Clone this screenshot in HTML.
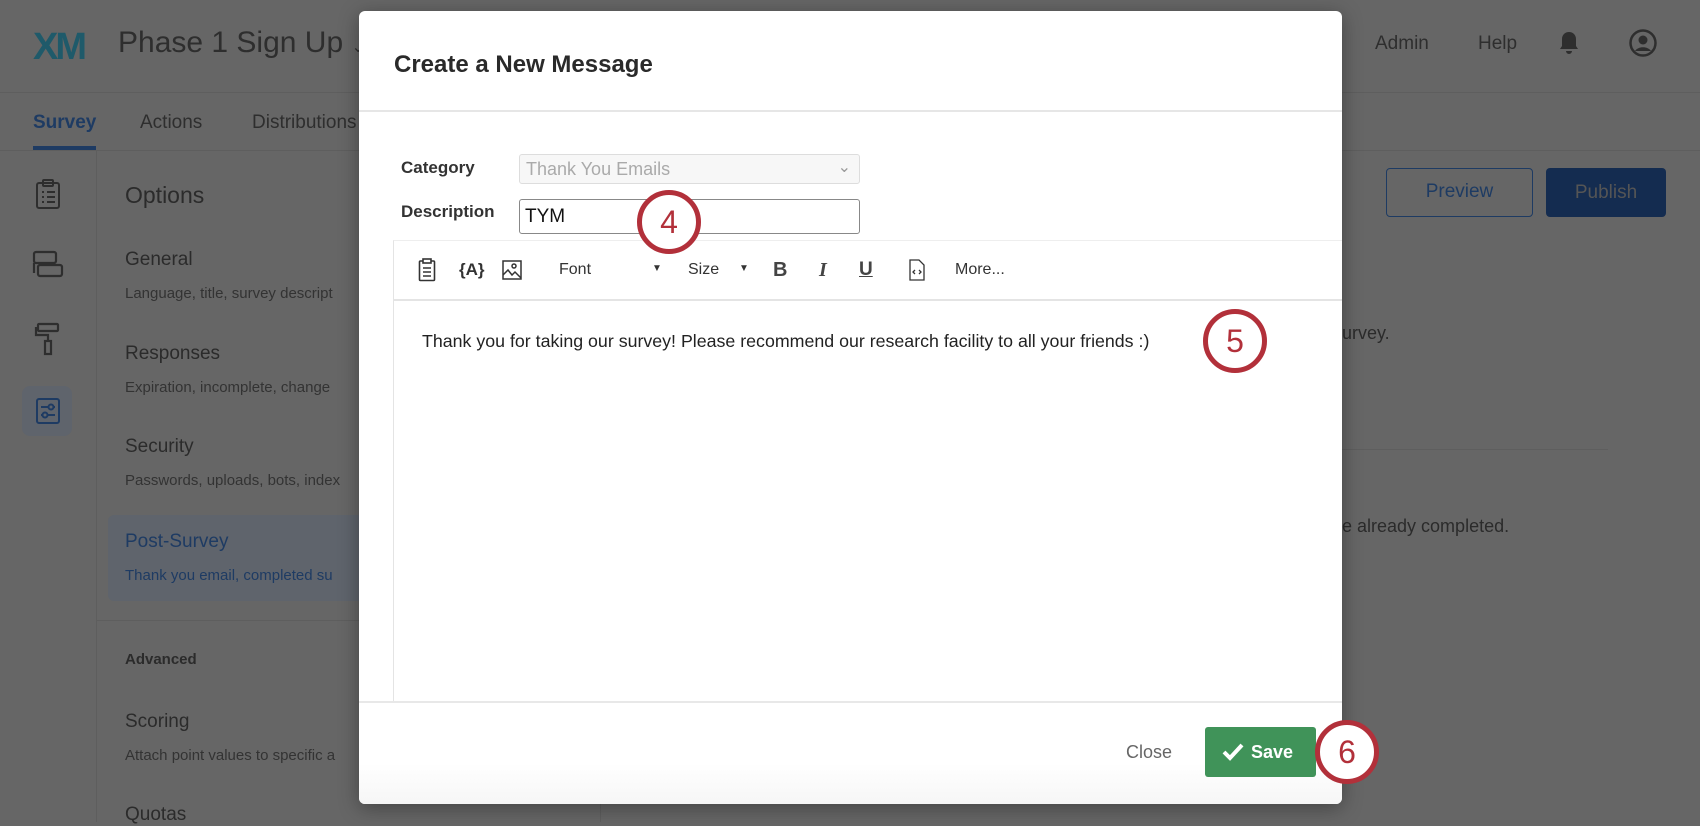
<!DOCTYPE html>
<html><head><meta charset="utf-8"><style>
*{box-sizing:border-box;margin:0;padding:0}
body{width:1700px;height:822px;overflow:hidden;background:#666;font-family:"Liberation Sans",sans-serif;position:relative;color:#2b2b2b}
.a{position:absolute;white-space:nowrap}
.ring{position:absolute;width:64px;height:64px;border:5px solid #b2303a;border-radius:50%;background:#fff;color:#b2303a;font-size:32px;text-align:center;line-height:54px}
</style></head><body>
<div class="a" style="left:0;top:0;width:1700px;height:93px;border-bottom:1px solid #5e5e5e"></div>
<div class="a" style="left:33px;top:26px;font-size:38px;font-weight:bold;letter-spacing:-3px;color:#1f5a6a">XM</div>
<div class="a" style="left:118px;top:26px;font-size:30px;color:#2e2e2e">Phase 1 Sign Up <span style="font-size:16px">&#8964;</span></div>
<div class="a" style="left:1375px;top:33px;font-size:19px;color:#2e2e2e">Admin</div>
<div class="a" style="left:1478px;top:33px;font-size:19px;color:#2e2e2e">Help</div>
<svg class="a" style="left:1557px;top:30px" width="24" height="26" viewBox="0 0 24 26"><path d="M12 2c-4 0-7 3-7 7v7l-2 3h18l-2-3V9c0-4-3-7-7-7zM9 21a3 3 0 0 0 6 0z" fill="#2e2e2e"/></svg>
<svg class="a" style="left:1628px;top:28px" width="30" height="30" viewBox="0 0 30 30"><circle cx="15" cy="15" r="12.5" fill="none" stroke="#2e2e2e" stroke-width="2.5"/><circle cx="15" cy="12" r="4.5" fill="#2e2e2e"/><path d="M7 23c3-5 13-5 16 0" fill="#2e2e2e"/></svg>
<div class="a" style="left:0;top:150px;width:1700px;border-top:1px solid #5e5e5e"></div>
<div class="a" style="left:33px;top:112px;font-size:19px;font-weight:bold;color:#1e3b63">Survey</div>
<div class="a" style="left:33px;top:146px;width:63px;height:4px;background:#1e3b63"></div>
<div class="a" style="left:140px;top:112px;font-size:19px;color:#2e2e2e">Actions</div>
<div class="a" style="left:252px;top:112px;font-size:19px;color:#2e2e2e">Distributions</div>
<div class="a" style="left:96px;top:150px;height:672px;border-left:1px solid #5e5e5e"></div>
<div class="a" style="left:600px;top:150px;height:672px;border-left:1px solid #5e5e5e"></div>
<div class="a" style="left:22px;top:386px;width:50px;height:50px;border-radius:8px;background:#5f646c"></div>
<svg class="a" style="left:34px;top:178px" width="28" height="32" viewBox="0 0 28 32" fill="none" stroke="#2e2e2e" stroke-width="2"><rect x="3" y="5" width="22" height="25" rx="2"/><rect x="9" y="2" width="10" height="6" rx="1"/><path d="M8 14h2M13 14h8M8 19h2M13 19h8M8 24h2M13 24h8"/></svg>
<svg class="a" style="left:32px;top:250px" width="32" height="30" viewBox="0 0 32 30" fill="none" stroke="#2e2e2e" stroke-width="2.2"><rect x="2" y="2" width="22" height="11" rx="2"/><rect x="6" y="15" width="24" height="11" rx="2"/><path d="M2 13v10"/></svg>
<svg class="a" style="left:34px;top:322px" width="28" height="34" viewBox="0 0 28 34" fill="none" stroke="#2e2e2e" stroke-width="2.2"><rect x="4" y="2" width="20" height="7" rx="1"/><path d="M2 5v8h12v6"/><rect x="11" y="19" width="6" height="13"/></svg>
<svg class="a" style="left:35px;top:397px" width="26" height="28" viewBox="0 0 26 28" fill="none" stroke="#1e3b63" stroke-width="2"><rect x="2" y="2" width="22" height="24" rx="2"/><path d="M6 10h14M6 18h14"/><circle cx="16" cy="10" r="2.5" fill="#5f646c"/><circle cx="10" cy="18" r="2.5" fill="#5f646c"/></svg>
<div class="a" style="left:125px;top:182px;font-size:23px">Options</div>
<div class="a" style="left:125px;top:249px;font-size:19px">General</div>
<div class="a" style="left:125px;top:285px;font-size:15px;color:#333">Language, title, survey descript</div>
<div class="a" style="left:125px;top:343px;font-size:19px">Responses</div>
<div class="a" style="left:125px;top:379px;font-size:15px;color:#333">Expiration, incomplete, change</div>
<div class="a" style="left:125px;top:436px;font-size:19px">Security</div>
<div class="a" style="left:125px;top:472px;font-size:15px;color:#333">Passwords, uploads, bots, index</div>
<div class="a" style="left:108px;top:515px;width:260px;height:86px;background:#5f646c;border-radius:6px"></div>
<div class="a" style="left:125px;top:531px;font-size:19px;color:#1e3b63">Post-Survey</div>
<div class="a" style="left:125px;top:567px;font-size:15px;color:#1e3b63">Thank you email, completed su</div>
<div class="a" style="left:96px;top:620px;width:264px;border-top:1px solid #5e5e5e"></div>
<div class="a" style="left:125px;top:651px;font-size:15px;font-weight:bold">Advanced</div>
<div class="a" style="left:125px;top:711px;font-size:19px">Scoring</div>
<div class="a" style="left:125px;top:747px;font-size:15px;color:#333">Attach point values to specific a</div>
<div class="a" style="left:125px;top:804px;font-size:19px">Quotas</div>
<div class="a" style="left:1386px;top:168px;width:147px;height:49px;border:1.5px solid #1e3b63;border-radius:4px;color:#1e3b63;font-size:19px;text-align:center;line-height:46px">Preview</div>
<div class="a" style="left:1546px;top:168px;width:120px;height:49px;background:#142c50;border-radius:4px;font-size:19px;text-align:center;line-height:49px;color:#555">Publish</div>
<div class="a" style="left:1342px;top:323px;font-size:18px">urvey.</div>
<div class="a" style="left:1342px;top:449px;width:266px;border-top:1px solid #5e5e5e"></div>
<div class="a" style="left:1342px;top:516px;font-size:18px">e already completed.</div>

<div class="a" style="left:359px;top:11px;width:983px;height:793px;background:#fff;border-radius:6px;box-shadow:0 4px 20px rgba(0,0,0,.35);overflow:hidden">
 <div class="a" style="left:35px;top:40px;font-size:24px;font-weight:bold;color:#2a2a2a">Create a New Message</div>
 <div class="a" style="left:0;top:99px;width:983px;border-top:2px solid #e6e6e6"></div>
 <div class="a" style="left:42px;top:147px;font-size:17px;font-weight:bold;color:#333">Category</div>
 <div class="a" style="left:160px;top:143px;width:341px;height:30px;border:1px solid #ddd;border-radius:3px;background:#f7f7f7;color:#aaa;font-size:18px;padding:4px 6px">Thank You Emails<span style="position:absolute;right:8px;top:2px;color:#999;font-size:16px">&#8964;</span></div>
 <div class="a" style="left:42px;top:191px;font-size:17px;font-weight:bold;color:#333">Description</div>
 <div class="a" style="left:160px;top:188px;width:341px;height:35px;border:1.5px solid #888;border-radius:3px;font-size:19px;color:#111;padding:6px 5px">TYM</div>
 <div class="a" style="left:34px;top:229px;width:949px;height:473px;border-left:1px solid #e4e4e4;border-top:1px solid #eee"></div>
 <div class="a" style="left:34px;top:288px;width:949px;border-top:2px solid #e4e4e4"></div>
 <svg class="a" style="left:59px;top:247px" width="18" height="24" viewBox="0 0 18 24" fill="none" stroke="#333" stroke-width="1.6"><rect x="1.5" y="3" width="15" height="19.5" rx="1"/><rect x="5" y="1" width="8" height="4" fill="#fff"/><path d="M5 10h8M5 14h8M5 18h8"/></svg>
 <div class="a" style="left:100px;top:249px;font-size:17px;font-weight:bold;color:#333">{A}</div>
 <svg class="a" style="left:143px;top:249px" width="20" height="20" viewBox="0 0 20 20" fill="none" stroke="#333" stroke-width="1.5"><rect x="1" y="1" width="18" height="18"/><circle cx="12" cy="6" r="2"/><path d="M1 15l5-5 4 5 3-3 6 6"/></svg>
 <div class="a" style="left:200px;top:250px;font-size:16px;color:#333">Font</div>
 <div class="a" style="left:293px;top:252px;font-size:10px;color:#333">&#9660;</div>
 <div class="a" style="left:329px;top:250px;font-size:16px;color:#333">Size</div>
 <div class="a" style="left:380px;top:252px;font-size:10px;color:#333">&#9660;</div>
 <div class="a" style="left:414px;top:248px;font-size:20px;font-weight:bold;color:#444">B</div>
 <div class="a" style="left:460px;top:248px;font-size:20px;font-weight:bold;font-style:italic;color:#444;font-family:'Liberation Serif',serif">I</div>
 <div class="a" style="left:500px;top:248px;font-size:19px;font-weight:bold;color:#444;text-decoration:underline">U</div>
 <svg class="a" style="left:550px;top:248px" width="16" height="22" viewBox="0 0 16 22" fill="none" stroke="#333" stroke-width="1.3"><path d="M1 1h9l5 5v15H1z"/><path d="M6 11l-2 2 2 2M10 11l2 2-2 2"/></svg>
 <div class="a" style="left:596px;top:250px;font-size:16px;color:#333">More...</div>
 <div class="a" style="left:63px;top:320px;font-size:17.8px;color:#222">Thank you for taking our survey! Please recommend our research facility to all your friends :)</div>
 <div class="a" style="left:0;top:690px;width:983px;border-top:2px solid #e8e8e8"></div>
 <div class="a" style="left:0;top:692px;width:983px;height:101px;background:linear-gradient(#fff 60%,#f6f6f6)"></div>
 <div class="a" style="left:767px;top:731px;font-size:18px;color:#666">Close</div>
 <div class="a" style="left:846px;top:716px;width:111px;height:50px;background:#409359;border-radius:3px;color:#fff;font-size:18px;font-weight:bold;line-height:50px;padding-left:46px">Save</div>
 <svg class="a" style="left:863px;top:731px" width="22" height="20" viewBox="0 0 22 20"><path d="M2 10l6 6L20 3" fill="none" stroke="#fff" stroke-width="4"/></svg>
</div>
<div class="ring" style="left:637px;top:190px">4</div>
<div class="ring" style="left:1203px;top:309px">5</div>
<div class="ring" style="left:1315px;top:720px">6</div>
</body></html>
